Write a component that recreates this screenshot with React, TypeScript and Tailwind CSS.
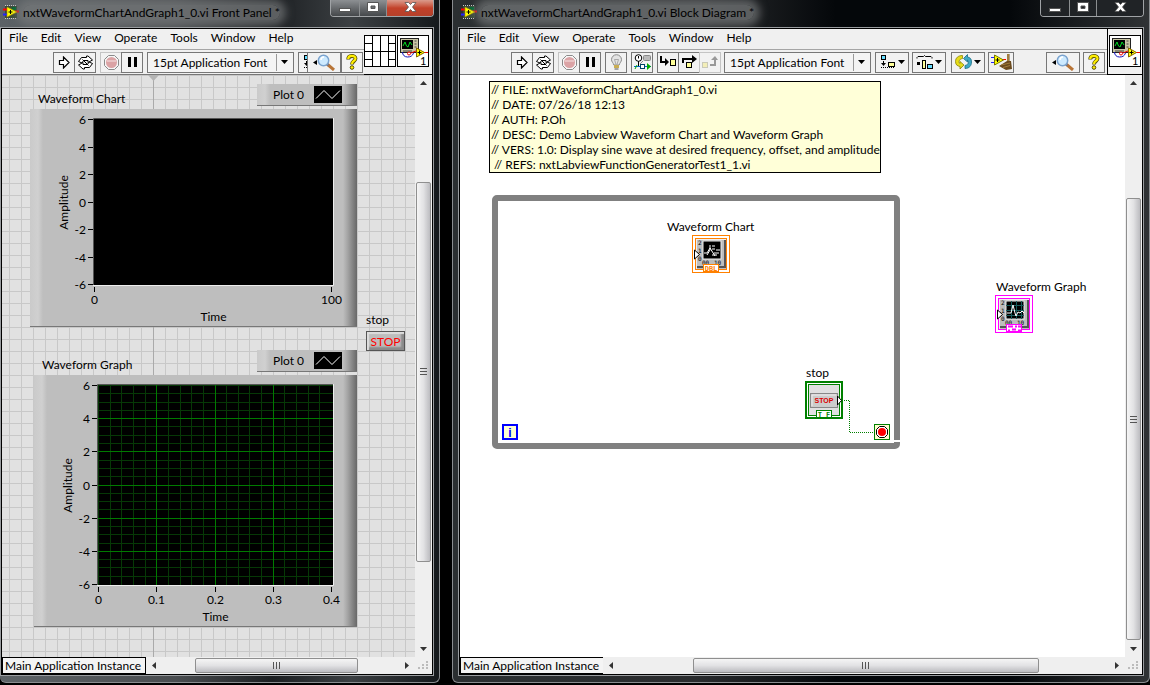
import type { ReactNode } from 'react';

const yTicks = [6, 4, 2, 0, -2, -4, -6];

const comments = [
  '// FILE: nxtWaveformChartAndGraph1_0.vi',
  '// DATE: 07/26/18 12:13',
  '// AUTH: P.Oh',
  '// DESC: Demo Labview Waveform Chart and Waveform Graph',
  '// VERS: 1.0: Display sine wave at desired frequency, offset, and amplitude',
  ' // REFS: nxtLabviewFunctionGeneratorTest1_1.vi',
];

/* ---------- icons ---------- */

function Icon({ w, h, children }: { w: number; h: number; children: ReactNode }) {
  return (
    <svg width={w} height={h} viewBox={`0 0 ${w} ${h}`} className="block shrink-0" aria-hidden="true">
      {children}
    </svg>
  );
}

function AppIcon() {
  return (
    <Icon w={16} h={14}>
      <rect x="2" y="1" width="12" height="12" fill="#3a4a3a" />
      <path d="M2 .5h12M2 13.5h12" stroke="#ccc" strokeDasharray="1 1" />
      <path d="M9 2h4v3H9z" fill="#063" />
      <path d="M0 4.500h5M12 6.500h4" stroke="#f00" strokeWidth="2" />
      <path d="M0 9.500h5" stroke="#22f" strokeWidth="2" />
      <path d="M4 2l10 5-10 5z" fill="#ff0" stroke="#a80" strokeWidth=".6" />
      <path d="M5.500 7h4M7.500 5v4" stroke="#000" />
    </Icon>
  );
}

function RunIcon() {
  return (
    <Icon w={13} h={13}>
      <path d="M1.500 4.500h4V1l5.500 5.500L5.500 12V8.500h-4z" fill="#fff" stroke="#000" strokeWidth="1.200" />
    </Icon>
  );
}

function RunLoopIcon() {
  return (
    <Icon w={17} h={15}>
      <path d="M1.500 6.500L4.500 2.500h5V1h1.500l4.500 4-4.500 2.500V5.500H6.500L5 8z" fill="#fff" stroke="#000" />
      <path d="M15.500 8.500l-3 4h-5V14H6l-4.500-4L6 7.500v2h4.500L12 7z" fill="#fff" stroke="#000" />
      <path d="M5.500 4.500l6 6" stroke="#000" />
    </Icon>
  );
}

function AbortIcon() {
  return (
    <Icon w={15} h={15}>
      <path d="M4.500.5h6l4 4v6l-4 4h-6l-4-4v-6z" fill="#f6f6f6" stroke="#8a8a8a" />
      <circle cx="7.500" cy="7.500" r="5.500" fill="#dba3a5" />
      <path d="M3 6h9" stroke="#e9c3c4" strokeWidth="2" />
    </Icon>
  );
}

function PauseIcon() {
  return (
    <Icon w={9} h={10}>
      <path d="M0 0h3v10H0zM6 0h3v10H6z" />
    </Icon>
  );
}

function BulbIcon() {
  return (
    <Icon w={13} h={16}>
      <path d="M6.500.7a5 5 0 0 1 5 5c0 2-1.800 3-2.300 5.300H3.800C3.300 8.700 1.500 7.700 1.500 5.700a5 5 0 0 1 5-5z" fill="#e4e4e4" stroke="#8d8d8d" />
      <path d="M4.500 5.500l1.500 5M8.500 5.500L7 10.500M4.500 5.500h4" stroke="#999" fill="none" strokeWidth=".8" />
      <path d="M4 11h5v3H4z" fill="#c9ad52" />
      <path d="M4.500 15h4" stroke="#555" />
    </Icon>
  );
}

function RetainIcon() {
  return (
    <Icon w={17} h={16}>
      <circle cx="4.500" cy="4" r="3.300" fill="#fff" stroke="#000" />
      <path d="M4.500 2v2.500M4.500 7v5M1 12.500h4" stroke="#000" />
      <rect x="9.500" y="1.500" width="7" height="5" rx="1" fill="#bbb" stroke="#888" />
      <path d="M9 7l-3 3" stroke="#888" />
      <path d="M0 12.500h17" stroke="#06c" />
      <rect x="6.500" y="10.500" width="4" height="4" fill="#fff" stroke="#046" />
      <path d="M13 9l4 3.500-4 3.500z" fill="#0a0" />
      <path d="M1 15l2-4" stroke="#0a0" />
    </Icon>
  );
}

function StepIntoIcon() {
  return (
    <Icon w={16} h={12}>
      <path d="M1 0v6h5" stroke="#000" strokeWidth="2" fill="none" />
      <path d="M5 2l4 4-4 4z" />
      <rect x="10.500" y="3.500" width="5" height="6" fill="#ff9" stroke="#000" />
    </Icon>
  );
}

function StepOverIcon() {
  return (
    <Icon w={15} h={14}>
      <path d="M1 8V4h10" stroke="#000" strokeWidth="2" fill="none" />
      <path d="M10 0l5 4-5 4z" />
      <rect x="4.500" y="7.500" width="5" height="5" fill="#ff9" stroke="#000" />
    </Icon>
  );
}

function StepOutIcon() {
  return (
    <Icon w={16} h={13}>
      <rect x=".5" y="6.500" width="5" height="5" fill="#f3eeb8" stroke="#c9c9b8" />
      <path d="M8 9h5V4" stroke="#999" strokeWidth="2" fill="none" />
      <path d="M9 4l4-4 3 4z" fill="#999" />
    </Icon>
  );
}

function Caret() {
  return (
    <Icon w={7} h={4}>
      <path d="M0 0h7L3.500 4z" />
    </Icon>
  );
}

function AlignIcon() {
  return (
    <Icon w={16} h={14}>
      <rect x="1.500" y=".5" width="4" height="4" fill="#6df" stroke="#000" />
      <path d="M3.500 6v3" stroke="#000" />
      <path d="M1 8h5l-2.500 3z" />
      <path d="M1 12.500h14" stroke="#000" strokeDasharray="1 1" />
      <rect x="8.500" y="7.500" width="6" height="4" fill="#ff9" stroke="#000" />
    </Icon>
  );
}

function DistributeIcon() {
  return (
    <Icon w={17} h={14}>
      <path d="M1 3.500V2.500L2 1.500h5.500L8.500.5l1 1H15l1 1v1" stroke="#000" fill="none" />
      <rect x="1" y="7" width="3" height="3" />
      <rect x="6.500" y="5.500" width="3" height="8" fill="#ff9" stroke="#000" />
      <rect x="11.500" y="9.500" width="5" height="4" fill="#6df" stroke="#000" />
    </Icon>
  );
}

function ReorderIcon() {
  return (
    <Icon w={17} h={16}>
      <path d="M7.500 1.500C3 1.500.5 4 .5 7.500S2.500 12 5 12.500v2.500l4-4-4-3.500v2C3.500 9 3.500 5 7.500 4.500z" fill="#e6dc18" stroke="#8a8408" strokeWidth=".8" />
      <path d="M10 14.500c4.500 0 6.500-3 6.500-6.500S15 3.500 12.500 3V.5l-4 4 4 3.500V6c1.500.5 1.500 5-2.500 5.500z" fill="#3fa9c4" stroke="#196c84" strokeWidth=".8" />
    </Icon>
  );
}

function CleanupIcon() {
  return (
    <Icon w={21} h={16}>
      <path d="M0 3.500h4M0 8.500h4" stroke="#22f" />
      <path d="M10 5.500h5" stroke="#f00" />
      <path d="M3.500 1l9 5-9 5z" fill="#ff0" stroke="#770" />
      <path d="M4.500 6h4M6.500 4v4" stroke="#000" />
      <path d="M16 0h2.500v7h1.500l1 8-6 1-7-4 8-5z" fill="#6a4a1e" />
      <path d="M10 11l9-2M12 13.500l7-2" stroke="#b08a44" strokeWidth=".8" />
      <path d="M17 0v7" stroke="#d9b15f" />
    </Icon>
  );
}

function SearchIcon() {
  return (
    <Icon w={22} h={17}>
      <path d="M4 6v5L0 8.500z" />
      <path d="M14 10l7 6" stroke="#b87436" strokeWidth="3" />
      <path d="M13.500 9.500l2 2" stroke="#778" strokeWidth="2" />
      <circle cx="10.500" cy="6.500" r="5.200" fill="#cdeaff" stroke="#7aa3cf" strokeWidth="1.500" />
      <path d="M8 6a3 3 0 0 1 3-3" stroke="#fff" strokeWidth="1.500" fill="none" />
    </Icon>
  );
}

function HelpIcon() {
  return (
    <Icon w={12} h={16}>
      <path d="M2.200 5.500C2.200 1 9.500 1 9.500 4.500c0 2.500-3.500 2.500-3.500 6" stroke="#554d00" strokeWidth="3.800" fill="none" />
      <path d="M2.200 5C2.200 1 9.500 1 9.500 4.500c0 2.500-3.500 2.500-3.500 5.500" stroke="#fe0" strokeWidth="2.200" fill="none" />
      <circle cx="6" cy="13.500" r="1.800" fill="#fe0" stroke="#554d00" />
    </Icon>
  );
}

function ConnectorPane() {
  return (
    <Icon w={32} h={32}>
      <rect x=".5" y=".5" width="31" height="31" fill="#fff" stroke="#000" />
      <path d="M8.500 0v32M16.500 0v32M24.500 0v32M0 16.500h32M0 8.500h8M0 24.500h8M24 8.500h8M24 24.500h8" stroke="#000" />
    </Icon>
  );
}

function ViIcon() {
  return (
    <Icon w={32} h={32}>
      <rect x=".5" y=".5" width="31" height="31" fill="#fff" stroke="#000" />
      <rect x="3.500" y="3.500" width="18" height="14" fill="#c9c5a4" stroke="#222" />
      <rect x="5" y="5" width="11" height="9" fill="#000" />
      <path d="M6 11l2-4 1.500 4 1.500 1 2-5 2 3" stroke="#0d2" fill="none" />
      <path d="M17.500 6h2M17.500 9h2M17.500 12h2M6 16h9" stroke="#444" />
      <path d="M5.500 17c0 3 2 5 5 5s5-1 6-4" stroke="#11b" fill="none" />
      <circle cx="12" cy="18.500" r="1.500" fill="#fff" stroke="#e00" />
      <path d="M14 18l5-2M26 17.500h5" stroke="#e00" />
      <path d="M19.500 13l8 4.500-8 4.500z" fill="#ff0" stroke="#860" />
      <path d="M20.500 17.500h4M22.500 15.500v4" stroke="#000" />
      <text x="23" y="30" fontSize="11">1</text>
    </Icon>
  );
}

/* ---------- toolbar ---------- */

function ToolButton({ label, children, className = 'w-[22px]' }: { label: string; children: ReactNode; className?: string }) {
  return (
    <button
      type="button"
      aria-label={label}
      className={`-mr-px flex h-[21px] shrink-0 items-center justify-center gap-0.5 overflow-hidden border border-[#777] bg-[#f2f2f2] ${className}`}
    >
      {children}
    </button>
  );
}

function RunControls() {
  return (
    <>
      <div className="flex pr-px">
        <ToolButton label="Run"><RunIcon /></ToolButton>
        <ToolButton label="Run continuously"><RunLoopIcon /></ToolButton>
      </div>
      <div className="flex pr-px">
        <ToolButton label="Abort" className="w-[22px] border-[#c4c4c4]"><AbortIcon /></ToolButton>
        <ToolButton label="Pause"><PauseIcon /></ToolButton>
      </div>
    </>
  );
}

function FontSelect() {
  return (
    <div className="relative h-[21px] w-[147px] shrink-0">
      <select aria-label="Font" className="h-[21px] w-full appearance-none border border-[#777] bg-[#f4f4f4] pl-[5px] leading-[15px]">
        <option>15pt Application Font</option>
      </select>
      <span className="pointer-events-none absolute inset-y-0.5 right-0 flex w-[18px] items-center justify-start border-l border-[#999] pl-1">
        <Caret />
      </span>
    </div>
  );
}

function SearchAndHelp({ className }: { className: string }) {
  return (
    <div className={`flex shrink-0 ${className}`}>
      <ToolButton label="Search" className="w-[34px]"><SearchIcon /></ToolButton>
      <ToolButton label="Context help"><HelpIcon /></ToolButton>
    </div>
  );
}

/* ---------- window chrome ---------- */

function WindowButtons({ active }: { active: boolean }) {
  return (
    <div className="flex h-[17px] w-[104px] shrink-0 overflow-hidden rounded-b border border-t-0 border-[#a0a3a6] text-white">
      <button
        type="button"
        aria-label="Minimize"
        className={`flex w-[29px] items-center justify-center border-r border-[#8b8e90] pt-1 ${active ? 'bg-linear-to-b from-[#8d9093] to-[#45484b]' : 'bg-[#202326]'}`}
      >
        <Icon w={12} h={4}><rect x=".5" y=".5" width="11" height="3" fill="#fff" stroke="#555" /></Icon>
      </button>
      <button
        type="button"
        aria-label="Maximize"
        className={`flex w-[27px] items-center justify-center border-r border-[#8b8e90] pb-0.5 ${active ? 'bg-linear-to-b from-[#8d9093] to-[#45484b]' : 'bg-[#202326]'}`}
      >
        <Icon w={12} h={10}><path d="M.5.5h11v9H.5zM4 4v2.500h4V4z" fill="#fff" fillRule="evenodd" stroke="#555" /></Icon>
      </button>
      <button
        type="button"
        aria-label="Close"
        className={`flex flex-1 items-center justify-center pb-0.5 ${active ? 'bg-linear-to-b from-[#d99a8c] via-[#c2412a] to-[#b5402a]' : 'bg-[#202326]'}`}
      >
        <Icon w={13} h={10}>
          <path d="M1 .5h3.500l2 2 2-2H12L8.500 5 12 9.500H8.500l-2-2-2 2H1L4.500 5z" fill="#fff" stroke="#555" strokeWidth=".8" />
        </Icon>
      </button>
    </div>
  );
}

function MenuBar() {
  return (
    <nav className="flex h-[21px] gap-[13px] border-b border-[#a5a5a5] pb-1 pl-[7px]">
      {['File', 'Edit', 'View', 'Operate', 'Tools', 'Window', 'Help'].map((item) => (
        <button key={item} type="button">{item}</button>
      ))}
    </nav>
  );
}

function Arrow({ dir }: { dir: 'up' | 'down' | 'left' | 'right' }) {
  const d = { up: 'M0 5h7L3.500 1z', down: 'M0 2h7L3.500 6z', left: 'M5 0v7L1 3.500z', right: 'M2 0v7l4-3.500z' }[dir];
  return (
    <Icon w={7} h={7}>
      <path d={d} fill="#333" />
    </Icon>
  );
}

function VScroll({ before, thumb, after }: { before: string; thumb: string; after: string }) {
  return (
    <div className="flex w-[17px] shrink-0 flex-col items-center bg-[#efefef]">
      <div className="flex h-[17px] shrink-0 items-center"><Arrow dir="up" /></div>
      <div className={before} />
      <div className={`flex w-[15px] items-center justify-center rounded-xs border border-[#8f8f8f] bg-linear-to-r from-[#f5f5f5] via-[#e2e2e4] to-[#bcbcc0] ${thumb}`}>
        <Icon w={7} h={9}><path d="M0 1.500h7M0 4.500h7M0 7.500h7" stroke="#555" /></Icon>
      </div>
      <div className={after} />
      <div className="flex h-[17px] shrink-0 items-center"><Arrow dir="down" /></div>
    </div>
  );
}

function BottomBar({ before, thumb, after, box }: { before: string; thumb: string; after: string; box: string }) {
  return (
    <div className="flex h-[17px] shrink-0 bg-[#efefef]">
      <div className={`flex shrink-0 items-center border border-black bg-[#f4f4f4] whitespace-nowrap ${box}`}>Main Application Instance</div>
      <div className="flex w-[17px] shrink-0 items-center justify-center"><Arrow dir="left" /></div>
      <div className={before} />
      <div className={`my-px flex items-center justify-center rounded-xs border border-[#8f8f8f] bg-linear-to-b from-[#f5f5f5] via-[#e2e2e4] to-[#bcbcc0] ${thumb}`}>
        <Icon w={9} h={7}><path d="M1.500 0v7M4.500 0v7M7.500 0v7" stroke="#555" /></Icon>
      </div>
      <div className={after} />
      <div className="flex w-[17px] shrink-0 items-center justify-center"><Arrow dir="right" /></div>
      <div className="flex w-[17px] shrink-0 items-end justify-end p-1">
        <Icon w={10} h={9}>
          <path d="M8 0h2v2H8zM8 3h2v2H8zM8 6h2v2H8zM4 3h2v2H4zM4 6h2v2H4zM0 6h2v2H0z" fill="#bbb" />
        </Icon>
      </div>
    </div>
  );
}

interface FrameProps {
  title: string;
  active?: boolean;
  className: string;
  toolbar: ReactNode;
  icons: ReactNode;
  children: ReactNode;
  bottom: ReactNode;
}

function WindowFrame({ title, active = false, className, toolbar, icons, children, bottom }: FrameProps) {
  return (
    <section className={`flex min-w-0 flex-col overflow-hidden rounded-b-md border-r border-b border-[#8a8d90] pr-[5px] pb-[6px] ${className}`}>
      <header className="flex h-[27px] shrink-0 justify-between pl-[3px]">
        <div className="flex items-center gap-1 pb-[3px]">
          <AppIcon />
          <h1 className="rounded-lg bg-[#777a7c]/70 whitespace-pre text-black shadow-[0_0_8px_6px_rgba(119,122,124,0.7)]">{title}</h1>
        </div>
        <WindowButtons active={active} />
      </header>
      <div className="flex min-h-0 flex-1 flex-col border border-[#9a9da0] bg-black p-px">
        <div className="flex h-[46px] shrink-0 bg-[#f0f0f0]">
          <div className="flex min-w-0 flex-1 flex-col">
            <MenuBar />
            <div className="flex flex-1 items-center border-b border-[#777]">{toolbar}</div>
          </div>
          {icons}
        </div>
        {children}
        {bottom}
      </div>
    </section>
  );
}

/* ---------- front panel ---------- */

interface PlotProps {
  name: string;
  width: number;
  height: number;
  xTicks: string[];
  grid?: boolean;
}

// plot area starts 64px in and 9px down from the corner of the raised panel
function Plot({ name, width, height, xTicks, grid = false }: PlotProps) {
  const xAt = (i: number) => Math.round(64 + (i * (width - 2)) / (xTicks.length - 1)) + 0.5;
  const yAt = (i: number) => Math.round(10 + (i * (height - 2)) / 6) + 0.5;
  const minorX = Array.from({ length: 20 }, (_, i) => Math.round(64 + (i * (width - 2)) / 20) + 0.5);
  const minorY = Array.from({ length: 24 }, (_, i) => Math.round(10 + (i * (height - 2)) / 24) + 0.5);

  return (
    <svg width={width + 88} height={height + 50} role="img" aria-label={name} className="block">
      <rect x="64" y="9" width={width} height={height} />
      {grid && (
        <g>
          {minorX.map((x) => <path key={x} d={`M${x} 10V${9 + height}`} stroke="#063806" />)}
          {minorY.map((y) => <path key={y} d={`M64 ${y}H${64 + width}`} stroke="#063806" />)}
          {xTicks.slice(1, -1).map((t, i) => <path key={t} d={`M${xAt(i + 1)} 10V${9 + height}`} stroke="#007a00" />)}
          {yTicks.slice(1, -1).map((t, i) => <path key={t} d={`M64 ${yAt(i + 1)}H${64 + width}`} stroke="#007a00" />)}
        </g>
      )}
      <path d={`M63.500 ${9 + height}V9.500H${64 + width}`} stroke="#555" fill="none" />
      <path d={`M63 ${9.5 + height}H${64.5 + width}V9`} stroke="#eee" fill="none" />
      {yTicks.map((t, i) => (
        <g key={t}>
          <path d={`M58 ${yAt(i)}h5`} stroke="#000" />
          <text x="56" y={yAt(i) + 4} textAnchor="end">{t}</text>
        </g>
      ))}
      {xTicks.map((t, i) => (
        <g key={t}>
          <path d={`M${xAt(i)} ${height + 11}v5`} stroke="#000" />
          <text x={xAt(i)} y={height + 28} textAnchor="middle">{t}</text>
        </g>
      ))}
      <text x={64 + width / 2} y={height + 45} textAnchor="middle">Time</text>
      <text transform={`translate(38 ${10 + height / 2}) rotate(-90)`} textAnchor="middle">Amplitude</text>
    </svg>
  );
}

function RaisedPanel({ className, children }: { className: string; children: ReactNode }) {
  return (
    <div className={`absolute border-b border-[#777] bg-[linear-gradient(to_right,#cacaca,#d0d0d0_8px,#bebebe_13px,#bebebe_calc(100%-14px),#a8a8a8_calc(100%-10px),#686868)] ${className}`}>
      {children}
    </div>
  );
}

function PlotLegend({ className }: { className: string }) {
  return (
    <RaisedPanel className={`flex h-[22px] w-[100px] items-center justify-between pr-[15px] pl-4 ${className}`}>
      <span>Plot 0</span>
      <svg width="28" height="17" aria-hidden="true">
        <rect width="28" height="17" />
        <path d="M2 12.500l8-8 8 8 8-8" stroke="#fff" fill="none" />
      </svg>
    </RaisedPanel>
  );
}

function FrontPanel() {
  return (
    <WindowFrame
      title="nxtWaveformChartAndGraph1_0.vi Front Panel *"
      active
      className="bg-[linear-gradient(to_right,#5c6266,#4a4d50_40%,#1c1f22_62%,#3c4043_80%,#15191c)]"
      toolbar={
        <div className="flex min-w-0 gap-1 pl-[51px]">
          <RunControls />
          <FontSelect />
          <div className="flex">
            <ToolButton label="Align objects" className="w-[10px] justify-start pl-1"><AlignIcon /></ToolButton>
            <SearchAndHelp className="gap-px" />
          </div>
        </div>
      }
      icons={
        <div className="flex shrink-0 gap-px border-b border-black pt-1.5 pr-[3px]">
          <ConnectorPane />
          <ViIcon />
        </div>
      }
      bottom={<BottomBar box="w-[144px] pl-0.5" before="w-8" thumb="flex-1" after="w-10" />}
    >
      <div className="flex min-h-0 flex-1">
        <main className="relative min-w-0 flex-1 overflow-hidden bg-[#e1e1e1] bg-[linear-gradient(to_right,#c8c8c8_1px,transparent_1px),linear-gradient(to_bottom,#c8c8c8_1px,transparent_1px)] bg-[size:12px_12px] bg-[position:7px_0px]">
          <div className="absolute inset-y-0 left-[151px] w-px bg-[#aaa]" />
          <svg width="11" height="6" className="absolute top-0 left-[146px]" aria-hidden="true">
            <path d="M0 0h11L5.500 6z" fill="#b4b4b4" />
          </svg>

          <h2 className="absolute top-4 left-9">Waveform Chart</h2>
          <PlotLegend className="top-[9px] left-[255px]" />
          <RaisedPanel className="top-[34px] left-[28px]">
            <Plot name="Waveform Chart" width={239} height={167} xTicks={['0', '100']} />
          </RaisedPanel>

          <label htmlFor="stop" className="absolute top-[237px] left-[364px]">stop</label>
          <button
            id="stop"
            type="button"
            className="absolute top-[256px] left-[364px] flex h-5 w-[39px] items-center justify-center border border-[#555] bg-[#bdbdbd] text-[#f00] shadow-[inset_2px_2px_1px_#ddd,inset_-3px_-3px_2px_#8a8a8a]"
          >
            STOP
          </button>

          <h2 className="absolute top-[282px] left-10">Waveform Graph</h2>
          <PlotLegend className="top-[275px] left-[255px]" />
          <RaisedPanel className="top-[300px] left-8">
            <Plot name="Waveform Graph" width={235} height={201} xTicks={['0', '0.1', '0.2', '0.3', '0.4']} grid />
          </RaisedPanel>
        </main>
        <VScroll before="flex-[90]" thumb="flex-[380]" after="flex-[78]" />
      </div>
    </WindowFrame>
  );
}

/* ---------- block diagram ---------- */

function ChartTerminal({ graph = false }: { graph?: boolean }) {
  const color = graph ? '#f0f' : '#ff8000';
  return (
    <svg width="38" height="38" className="block" aria-hidden="true">
      <rect x=".5" y=".5" width="37" height="37" fill="#fff" stroke={color} />
      <rect x="3.500" y="3.500" width="31" height="31" fill="#bdbdbd" stroke={color} />
      <path d="M4 4.500h30M4.500 4v30" stroke="#eee" />
      <path d="M33 5v27H5" stroke="#555" strokeWidth="2" fill="none" />
      <rect x="11" y="6" width="18" height="18" fill="#000" stroke="#eee" />
      {graph ? (
        <g>
          <path d="M16.500 6v18M21.500 6v18M26.500 6v18M11 10.500h18M11 15.500h18M11 20.500h18" stroke="#175c5c" />
          <path d="M12 18h4l2-8 2 8 1 3 2-4 2 1 2-2 2 2" stroke="#fff" fill="none" />
        </g>
      ) : (
        <path d="M12 18h3l3-5 5 8M18 10v5l-3 5M20 11h3M20 14h3M22 18h5M24 15h4M20 20h5" stroke="#fff" fill="none" />
      )}
      <g fontSize="6" fontFamily="DejaVu Sans Mono, monospace">
        <text x="6" y="10">2</text>
        <text x="6" y="18">1</text>
        <text x="6" y="26">0</text>
        <text x="10" y="30">00</text>
        <text x="22" y="30">10</text>
      </g>
      <path d="M2.500 15v9l5-4.500z" fill="#fff" stroke="#000" />
      <rect x="11.500" y="29.500" width="15" height="7" fill="#fff" stroke={color} />
      {graph ? (
        <path d="M13 31.500h5M20 31.500h2M23 31.500h3M13 35.500h2M17 34.500h4M23 35.500h3" stroke={color} strokeWidth="2" />
      ) : (
        <text x="19" y="36" fontSize="7" fontFamily="DejaVu Sans Mono, monospace" fontWeight="bold" fill={color} textAnchor="middle">DBL</text>
      )}
    </svg>
  );
}

function StopTerminal() {
  return (
    <svg width="38" height="38" className="block" aria-hidden="true">
      <rect x="1" y="1" width="36" height="36" fill="#fff" stroke="#008000" strokeWidth="2" />
      <rect x="3.500" y="3.500" width="31" height="31" fill="#e0e0e0" stroke="#008000" />
      <rect x="5.500" y="12.500" width="27" height="14" fill="#ccc" stroke="#888" />
      <path d="M7 25V14h24" stroke="#eee" fill="none" />
      <text x="19" y="22" fontSize="7" fontFamily="Liberation Sans, sans-serif" fontWeight="bold" fill="#d00" textAnchor="middle">STOP</text>
      <path d="M32.500 15v9l4-4.500z" fill="#fff" stroke="#000" />
      <rect x="11.500" y="29.500" width="15" height="7" fill="#fff" stroke="#008000" />
      <text x="19" y="36" fontSize="7" fontFamily="DejaVu Sans Mono, monospace" fontWeight="bold" fill="#008000" textAnchor="middle">T F</text>
    </svg>
  );
}

function BlockDiagram() {
  return (
    <WindowFrame
      title="nxtWaveformChartAndGraph1_0.vi Block Diagram *"
      className="border-l bg-[linear-gradient(to_right,#2b2f31,#2a2c2e_35%,#04070a_55%,#04070a_80%,#303335)] pl-[5px]"
      toolbar={
        <div className="flex min-w-0 flex-1 justify-between pr-[3px] pl-[51px]">
          <div className="flex gap-1">
            <RunControls />
            <div className="pr-px"><ToolButton label="Highlight execution"><BulbIcon /></ToolButton></div>
            <div className="pr-px"><ToolButton label="Retain wire values"><RetainIcon /></ToolButton></div>
            <div className="flex">
              <ToolButton label="Step into"><StepIntoIcon /></ToolButton>
              <ToolButton label="Step over"><StepOverIcon /></ToolButton>
              <ToolButton label="Step out" className="w-[22px] border-[#c4c4c4]"><StepOutIcon /></ToolButton>
            </div>
            <FontSelect />
            <ToolButton label="Align objects" className="w-[34px]"><AlignIcon /><Caret /></ToolButton>
            <ToolButton label="Distribute objects" className="w-[34px]"><DistributeIcon /><Caret /></ToolButton>
            <div className="pl-0.5"><ToolButton label="Reorder" className="w-[34px]"><ReorderIcon /><Caret /></ToolButton></div>
            <ToolButton label="Clean up diagram" className="w-[26px]"><CleanupIcon /></ToolButton>
          </div>
          <SearchAndHelp className="gap-1" />
        </div>
      }
      icons={
        <div className="shrink-0 border-b border-l border-black pt-1.5 pr-px pl-px">
          <ViIcon />
        </div>
      }
      bottom={<BottomBar box="w-[143px] border-r-0 pl-0.5" before="flex-[73]" thumb="flex-[346]" after="flex-[69]" />}
    >
      <div className="flex min-h-0 flex-1">
        <main className="relative min-w-0 flex-1 overflow-hidden bg-white">
          <div className="absolute top-1.5 left-[29px] h-[92px] w-[392px] border border-black bg-[#ffffd8] pl-px whitespace-pre">
            {comments.map((line) => (
              <p key={line}>{line}</p>
            ))}
          </div>

          {/* While loop */}
          <div className="absolute top-[120px] left-8 h-[254px] w-[408px] rounded-[5px] border-[6px] border-[#808080]" />
          <div className="absolute top-[365px] left-[434px] h-0.5 w-1.5 bg-white" />
          <svg width="16" height="16" className="absolute top-[349px] left-[42px]" aria-hidden="true">
            <rect x="1" y="1" width="14" height="14" fill="#ffffd0" stroke="#00f" strokeWidth="2" />
            <text x="8" y="13" fontSize="12" fontWeight="bold" fontFamily="Liberation Sans, sans-serif" fill="#00f" textAnchor="middle">i</text>
          </svg>

          <span className="absolute top-[144px] left-[207px]">Waveform Chart</span>
          <div className="absolute top-[160px] left-[232px]"><ChartTerminal /></div>

          <svg width="34" height="34" className="absolute top-[325px] left-[382px]" aria-hidden="true">
            <path d="M0 .5h7.500v32H33" stroke="#008000" strokeDasharray="1 1" fill="none" />
          </svg>
          <span className="absolute top-[290px] left-[346px]">stop</span>
          <div className="absolute top-[306px] left-[345px]"><StopTerminal /></div>
          <svg width="16" height="16" className="absolute top-[349px] left-[414px]" aria-hidden="true">
            <rect x=".5" y=".5" width="15" height="15" fill="#ffffd0" stroke="#008000" />
            <path d="M5.500 2.500h5l3 3v5l-3 3h-5l-3-3v-5z" fill="#fff" stroke="#000" />
            <circle cx="8" cy="8" r="4" fill="#f00" />
          </svg>

          <span className="absolute top-[204px] left-[536px]">Waveform Graph</span>
          <div className="absolute top-[220px] left-[535px]"><ChartTerminal graph /></div>
        </main>
        <VScroll before="flex-[107]" thumb="flex-[442]" after="flex-[0]" />
      </div>
    </WindowFrame>
  );
}

export default function App() {
  return (
    <div className="grid h-screen grid-cols-[440fr_698fr] gap-3 overflow-hidden bg-black pb-0.5 font-['Lato',sans-serif] text-[12px] leading-[15px] text-black">
      <FrontPanel />
      <BlockDiagram />
    </div>
  );
}
